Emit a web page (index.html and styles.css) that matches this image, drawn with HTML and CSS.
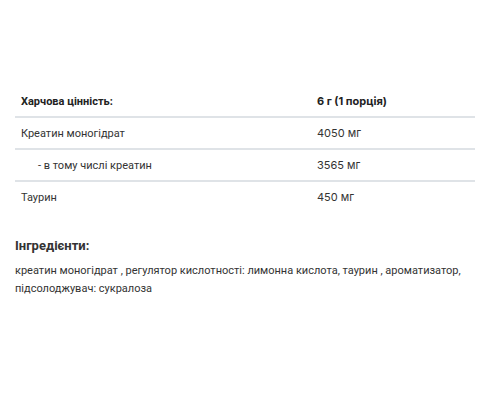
FILE: index.html
```html
<!DOCTYPE html>
<html lang="uk">
<head>
<meta charset="utf-8">
<link rel="stylesheet" href="styles.css">
</head>
<body>
<div class="page">
  <table class="nutri">
    <thead>
      <tr><th>Харчова цінність:</th><th class="val">6 г (1 порція)</th></tr>
    </thead>
    <tbody>
      <tr><td>Креатин моногідрат</td><td class="val">4050 мг</td></tr>
      <tr><td class="sub">- в тому числі креатин</td><td class="val">3565 мг</td></tr>
      <tr class="last"><td>Таурин</td><td class="val">450 мг</td></tr>
    </tbody>
  </table>
  <h3 class="ing-title">Інгредієнти:</h3>
  <p class="ing-text">креатин моногідрат , регулятор кислотності: лимонна кислота, таурин , ароматизатор, підсолоджувач: сукралоза</p>
</div>
</body>
</html>
```
FILE: styles.css
```css
html, body { margin: 0; padding: 0; background: #fff; }
body { font-family: Roboto, "Liberation Sans", sans-serif; color: #333; }
.page { padding: 86px 25px 0 15px; }
.nutri { width: 460px; border-collapse: collapse; font-size: 11px; }
.nutri th, .nutri td { height: 30px; padding: 0 0 0 6px; text-align: left; vertical-align: middle; border-bottom: 2px solid #dfe3e7; }
.nutri th { height: 30px; font-weight: 700; color: #222; }
.nutri .last td { border-bottom: none; }
.nutri .val { width: 158px; font-family: Inter, Roboto, sans-serif; }
.nutri td.sub { padding-left: 23px; }
.ing-title { margin: 26px 0 0; font-size: 13px; font-weight: 700; color: #333; }
.ing-text { margin: 9px 0 0; font-size: 11px; line-height: 18px; width: 460px; }
```
